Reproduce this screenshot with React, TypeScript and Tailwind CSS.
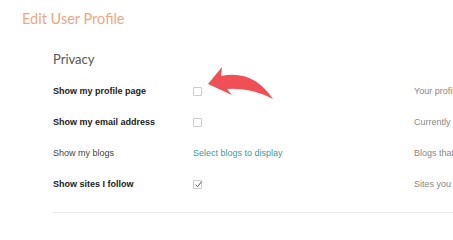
import React from "react";

const rows = [
  { label: "Show my profile page", bold: true, control: "box", desc: "Your profile page is visible" },
  { label: "Show my email address", bold: true, control: "box", desc: "Currently hidden" },
  { label: "Show my blogs", bold: false, control: "link", desc: "Blogs that you author" },
  { label: "Show sites I follow", bold: true, control: "check", desc: "Sites you follow" },
];

function Box({ checked }: { checked?: boolean }) {
  return (
    <div className="w-[9px] h-[9px] border border-[#cccccc] rounded-[1px] bg-white relative">
      {checked && (
        <svg viewBox="0 0 10 10" className="absolute left-[0px] top-[-1px] w-[9px] h-[9px]">
          <path d="M1.8 5.2 L4 7.4 L8.4 1.8" fill="none" stroke="#555" strokeWidth="1.1" />
        </svg>
      )}
    </div>
  );
}

export default function App() {
  return (
    <div className="w-[453px] h-[220px] overflow-hidden bg-white relative whitespace-nowrap font-['Liberation_Sans',Arial,sans-serif]">
      <div className="pl-[22px] pt-[9px] text-[14.5px] leading-[20px] text-[#f2a67e] font-['Lato',sans-serif]">
        Edit User Profile
      </div>
      <div className="pl-[53px] pt-[22px]">
        <div className="text-[13px] leading-[16px] text-[#555] font-['Lato',sans-serif] mb-[9px]">Privacy</div>
        <div className="flex flex-col">
          {rows.map((r) => (
            <div key={r.label} className="flex items-center h-[31px] text-[9px]">
              <div className={`w-[140px] shrink-0 ${r.bold ? "font-bold text-[#222]" : "text-[#444]"}`}>{r.label}</div>
              <div className="w-[221px] shrink-0 flex items-center">
                {r.control === "box" && <Box />}
                {r.control === "check" && <Box checked />}
                {r.control === "link" && <span className="text-[#3a9e9b]">Select blogs to display</span>}
              </div>
              <div className="shrink-0 text-[#888]">{r.desc}</div>
            </div>
          ))}
        </div>
        <div className="mt-[12px] h-px bg-[#ececec]" />
      </div>
      <svg className="absolute left-0 top-0" width="453" height="220" viewBox="0 0 453 220">
        <path d="M208 84 L222 67 L221 76 Q253 69 273 99 Q250 87 227 89 L232 95 Z" fill="#f04f55" />
      </svg>
    </div>
  );
}
